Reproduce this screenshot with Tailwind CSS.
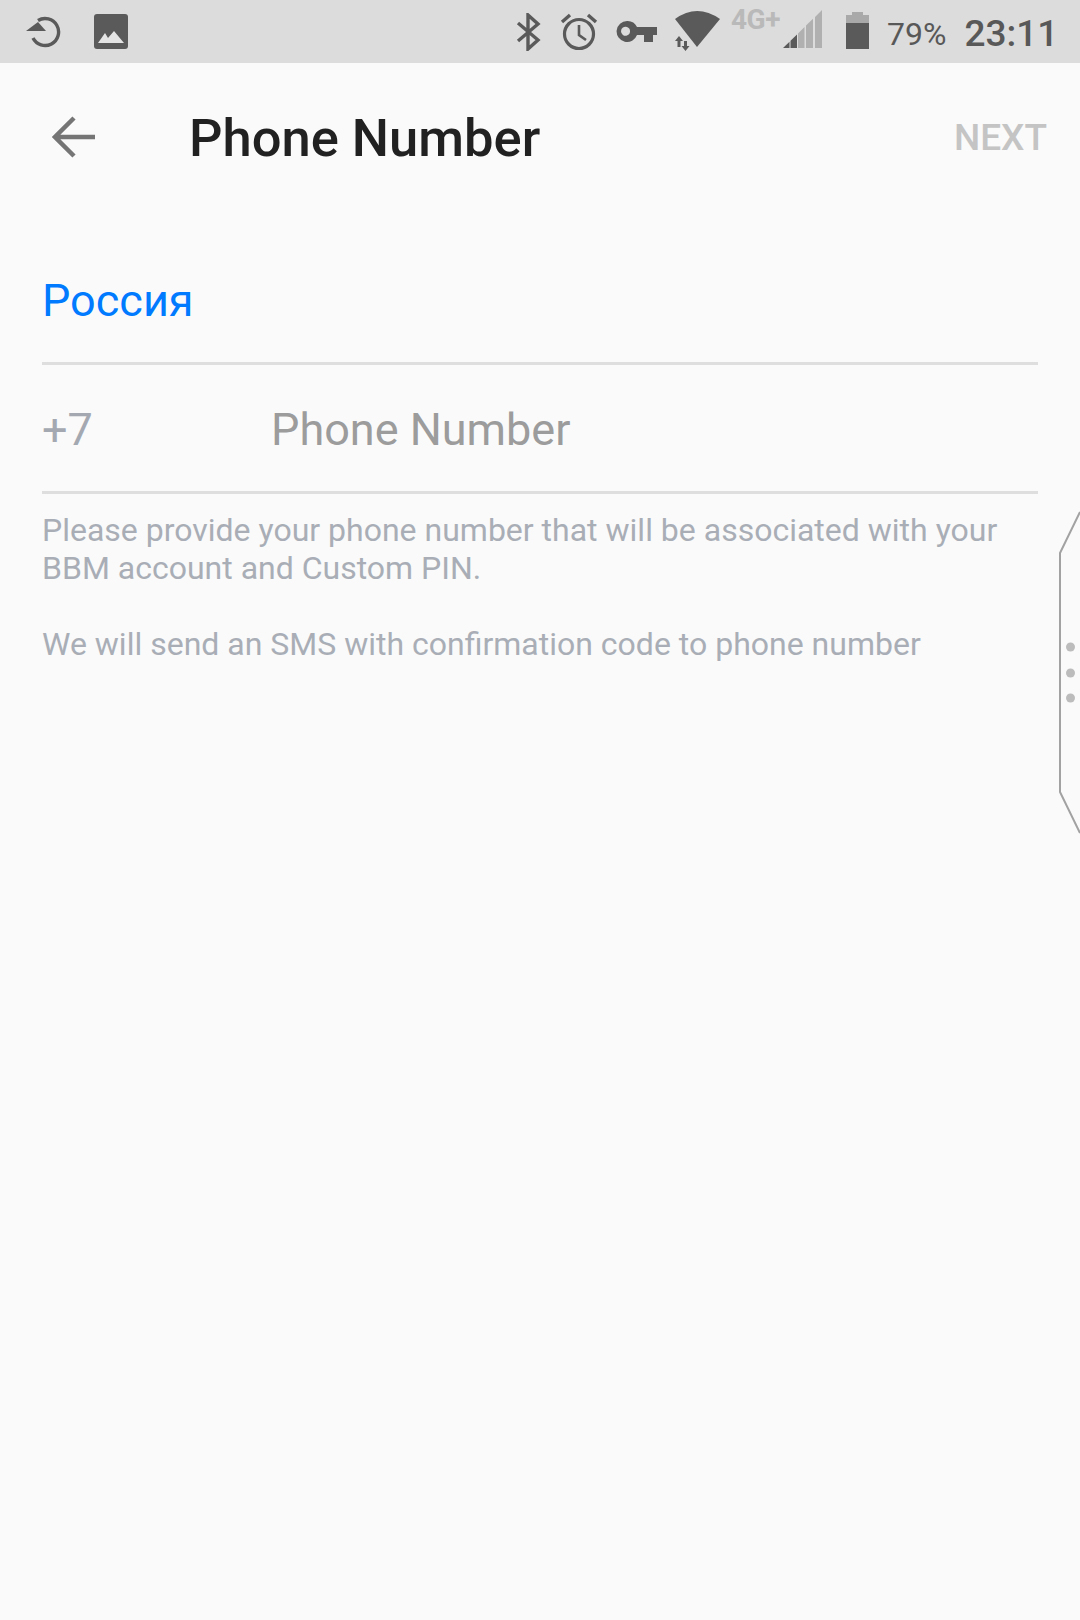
<!DOCTYPE html>
<html><head><meta charset="utf-8">
<script src="https://cdn.jsdelivr.net/npm/@tailwindcss/browser@4"></script>
</head>
<body class="m-0">
<div class="relative w-[1080px] h-[1620px] overflow-hidden bg-[#fafafa] font-['Roboto',sans-serif]">
  <div class="flex items-start h-[63px] bg-[#dcdcdc] text-[#585858]">
    <svg class="ml-[26px] mt-[15px] w-[38px] h-[33px]" viewBox="0 0 38 33"><path d="M12 5.500 A13.500 13.500 0 1 1 7 23" fill="none" stroke="#5a5a5a" stroke-width="3.400"/><path d="M0 16 L12 7 L20 16 Z" fill="#5a5a5a"/></svg>
    <svg class="ml-[30px] mt-[14px] w-[34px] h-[35px]" viewBox="0 0 34 35"><rect width="34" height="35" rx="3" fill="#5a5a5a"/><path d="M4 29 L11 19 L14 24 L20 17 L30 29 Z" fill="#e4e4e4"/></svg>
    <svg class="ml-[388px] mt-[13px] w-[26px] h-[38px]" viewBox="0 0 26 38"><path d="M2 10 L22 27 L12 36 V2 L22 11 L2 28" fill="none" stroke="#5a5a5a" stroke-width="3.400"/></svg>
    <svg class="ml-[18px] mt-[13px] w-[38px] h-[38px]" viewBox="0 0 38 38"><circle cx="19" cy="21" r="14.500" fill="none" stroke="#5a5a5a" stroke-width="3.200"/><path d="M19 12 V22 L26 27" fill="none" stroke="#5a5a5a" stroke-width="2.600"/><path d="M2 9 L10 2 M36 9 L28 2" stroke="#5a5a5a" stroke-width="3.400"/></svg>
    <svg class="ml-[18px] mt-[20px] w-[42px] h-[23px]" viewBox="0 0 42 23"><path fill-rule="evenodd" d="M11 1 A10.500 10.500 0 0 1 21 7 H41 V15 H37 V22 H28 V15 H21 A10.500 10.500 0 1 1 11 1 Z M11 7 A4.500 4.500 0 1 0 11 15.500 A4.500 4.500 0 0 0 11 7 Z" fill="#5a5a5a"/></svg>
    <svg class="ml-[14px] mt-[10px] w-[50px] h-[42px]" viewBox="0 0 50 42"><path d="M3 9 Q25 -7 48 9 L25 37 Z" fill="#5a5a5a"/><path d="M3 31 L7 26 L11 31 H8.500 V37 H5.500 V31 Z M9.500 36 L13.500 41 L17.500 36 H15 V31 H12 V36 Z" fill="#5a5a5a"/></svg>
    <div class="ml-[9px] mt-[3px] w-[52px] text-[28px] leading-[34px] font-bold text-[#b9b9b9] tracking-[-0.5px]">4G+</div>
    <svg class="mt-[9px] w-[40px] h-[40px]" viewBox="0 0 40 40"><path d="M0 39 L6.500 32.700 V39 Z M7.500 31.700 L14 25.400 V39 H7.500 Z" fill="#5a5a5a"/><path d="M15 24.400 L21.500 18.100 V39 H15 Z M23 16.600 L30 9.800 V39 H23 Z M32 7.900 L39 1 V39 H32 Z" fill="#b0b0b0"/></svg>
    <svg class="ml-[22px] mt-[12px] w-[25px] h-[38px]" viewBox="0 0 25 38"><path d="M7 0 H18 V3 H24 V11 H1 V3 H7 Z" fill="#a9a9a9"/><rect x="1" y="11" width="23" height="26" fill="#5a5a5a"/></svg>
    <div class="ml-[17px] mt-[16px] text-[32px] leading-[36px]">79%</div>
    <div class="ml-[18px] mt-[12px] text-[37px] leading-[44px] font-medium">23:11</div>
  </div>

  <div class="flex items-start h-[146px]">
    <svg class="ml-[52px] mt-[53px] w-[44px] h-[42px]" viewBox="0 0 44 42"><path d="M43 21 H4 M22 2 L3 21 L22 40" fill="none" stroke="#757575" stroke-width="4.500"/></svg>
    <div class="ml-[93px] mt-[45px] text-[52.500px] leading-[60px] font-medium text-[#212121]">Phone Number</div>
    <div class="ml-auto mr-[33px] mt-[53px] text-[37px] leading-[44px] font-medium text-[#c4c4c4]">NEXT</div>
  </div>

  <div class="mx-[42px]">
    <div class="h-[156px] pt-[62px] border-b-[3px] border-[#dedede] text-[45px] leading-[60px] text-[#007aff]">Россия</div>
    <div class="flex h-[129px] pt-[35px] border-b-[3px] border-[#dedede] text-[45px] leading-[60px]">
      <div class="w-[229px] text-[#a4a9b1]">+7</div>
      <div class="text-[#9c9c9c]">Phone Number</div>
    </div>
    <div class="mt-[17px] text-[32px] leading-[38px] text-[#a9aeb6]">
      <p>Please provide your phone number that will be associated with your<br>BBM account and Custom PIN.</p>
      <p class="mt-[38px]">We will send an SMS with confirmation code to phone number</p>
    </div>
  </div>

  <svg class="absolute left-[1050px] top-[505px] w-[30px] h-[340px]" viewBox="0 0 30 340">
    <path d="M30 7 L10 48 V287 L30 328" fill="none" stroke="#a2a2a2" stroke-width="2"/>
    <circle cx="20.500" cy="142" r="4.500" fill="#bcbcbc"/><circle cx="20.500" cy="168" r="4.500" fill="#bcbcbc"/><circle cx="20.500" cy="193" r="4.500" fill="#bcbcbc"/>
  </svg>
</div>
</body></html>
